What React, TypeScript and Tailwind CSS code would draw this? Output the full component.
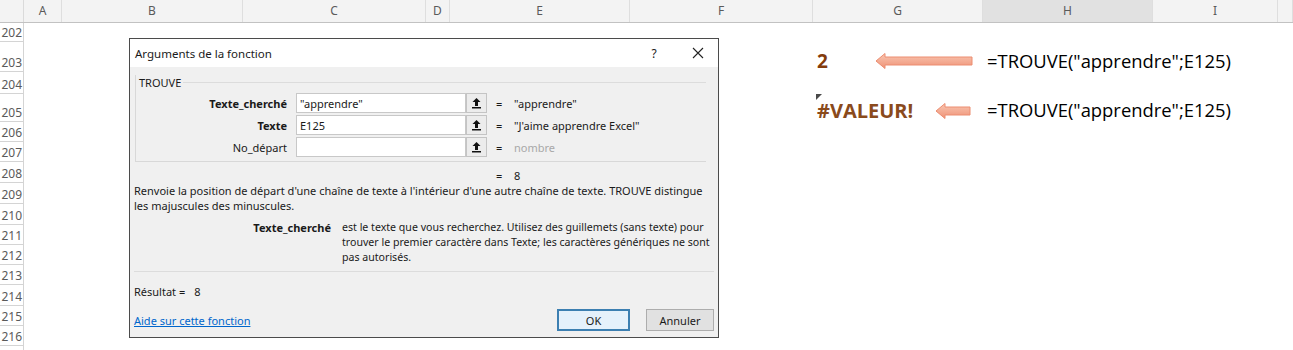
import React from 'react';

const cols = [
    { l: 'A', w: 'w-[38px]' },
    { l: 'B', w: 'w-[181px]' },
    { l: 'C', w: 'w-[183px]' },
    { l: 'D', w: 'w-[24px]' },
    { l: 'E', w: 'w-[180px]' },
    { l: 'F', w: 'w-[183px]' },
    { l: 'G', w: 'w-[170px]' },
    { l: 'H', w: 'w-[170px]', sel: true },
    { l: 'I', w: 'w-[125px]' },
    { l: '', w: 'flex-1' },
];

const rows = [
    { n: 202, h: 'h-[19px]' },
    { n: 203, h: 'h-[30px]' },
    { n: 204, h: 'h-[22px]' },
    { n: 205, h: 'h-[28px]' },
    { n: 206, h: 'h-[20px]' },
    { n: 207, h: 'h-[20px]' },
    { n: 208, h: 'h-[21px]' },
    { n: 209, h: 'h-[21px]' },
    { n: 210, h: 'h-[21px]' },
    { n: 211, h: 'h-[20px]' },
    { n: 212, h: 'h-[20px]' },
    { n: 213, h: 'h-[20px]' },
    { n: 214, h: 'h-[21px]' },
    { n: 215, h: 'h-[20px]' },
    { n: 216, h: 'h-[20px]' },
];

const Arrow: React.FC<{ w: number; id: string }> = ({ w, id }) => (
    <svg width={w} height="18" viewBox={`0 0 ${w} 18`}>
        <defs>
            <linearGradient id={id} x1="0" y1="0" x2="0" y2="1">
                <stop offset="0" stopColor="#f9c7b3" />
                <stop offset="1" stopColor="#ef9276" />
            </linearGradient>
        </defs>
        <path
            d={`M1 9 L10 1.5 L10 5 L${w - 1} 5 L${w - 1} 13 L10 13 L10 16.5 Z`}
            fill={`url(#${id})`}
            stroke="#ec8d70"
            strokeWidth="1"
        />
    </svg>
);

const RefButton: React.FC = () => (
    <div className="w-[21px] h-[20px] border border-[#c4c4c4] bg-[#ececec] flex items-center justify-center">
        <svg width="11" height="12" viewBox="0 0 11 12">
            <path d="M5.5 1 L1.5 5 L4 5 L4 9 L7 9 L7 5 L9.5 5 Z" fill="#111" />
            <rect x="1" y="10" width="9" height="1.5" fill="#111" />
        </svg>
    </div>
);

const ArgRow: React.FC<{ label: string; bold?: boolean; value: string; result: string; muted?: boolean }> = ({
    label,
    bold,
    value,
    result,
    muted,
}) => (
    <div className="flex items-center h-[20px]">
        <div className={`w-[151px] text-right ${bold ? 'font-bold' : ''}`}>{label}</div>
        <div className="ml-[9px] w-[170px] h-[20px] border border-[#c8c8c8] bg-white flex items-center px-[3px]">{value}</div>
        <RefButton />
        <div className="ml-[9px] w-[18px]">=</div>
        <div className={muted ? 'text-[#a8a8a8]' : ''}>{result}</div>
    </div>
);

const Dialog: React.FC = () => (
    <div className="absolute left-[129px] top-[38px] w-[590px] h-[300px] border border-[#4b4b4b] bg-[#f0f0f0] text-[11px] leading-[15px] text-[#1a1a1a] font-['Noto_Sans',sans-serif] flex flex-col">
        {/* Title bar */}
        <div className="h-[28px] bg-white flex items-center pl-[5px] pr-[14px] text-[11.5px]">
            <span className="flex-1">Arguments de la fonction</span>
            <span className="w-[20px] text-center mr-[28px] text-[12px]">?</span>
            <svg width="12" height="12" viewBox="0 0 12 12">
                <path d="M1 1 L11 11 M11 1 L1 11" stroke="#222" strokeWidth="1.1" />
            </svg>
        </div>

        {/* Group box */}
        <div className="ml-[5px] mr-[12px] mt-[8px] border-l border-b border-[#d8d8d8] pb-[4px]">
            <div className="flex items-center -ml-px h-[14px]">
                <span className="pl-[4px] pr-[2px]">TROUVE</span>
                <div className="flex-1 h-px bg-[#dcdcdc]" />
            </div>
            <div className="flex flex-col gap-[2px] mt-[4px]">
                <ArgRow label="Texte_cherché" bold value={'"apprendre"'} result={'"apprendre"'} />
                <ArgRow label="Texte" bold value="E125" result={'"J\'aime apprendre Excel"'} />
                <ArgRow label="No_départ" value="" result="nombre" muted />
            </div>
        </div>

        <div className="flex h-[16px] items-center mt-[5px] ml-[366px]">
            <span className="w-[18px]">=</span>
            <span>8</span>
        </div>

        <div className="px-[4px] whitespace-nowrap">
            Renvoie la position de départ d'une chaîne de texte à l'intérieur d'une autre chaîne de texte. TROUVE distingue
            <br />
            les majuscules des minuscules.
        </div>

        <div className="flex mt-[7px]">
            <div className="w-[212px] shrink-0 text-right font-bold pr-[11px]">Texte_cherché</div>
            <div className="flex-1 whitespace-nowrap text-[10.6px]">
                est le texte que vous recherchez. Utilisez des guillemets (sans texte) pour
                <br />
                trouver le premier caractère dans Texte; les caractères génériques ne sont
                <br />
                pas autorisés.
            </div>
        </div>

        <div className="mx-[4px] mt-[6px] h-px bg-[#dcdcdc]" />

        <div className="px-[4px] mt-[12px]">
            Résultat =<span className="ml-[9px]">8</span>
        </div>

        <div className="flex items-center px-[4px] mt-[10px]">
            <span className="flex-1 text-[#0066cc] underline">Aide sur cette fonction</span>
            <div className="w-[73px] h-[22px] border-2 border-[#3c7fb1] bg-[#e5f1fb] flex items-center justify-center">OK</div>
            <div className="ml-[16px] w-[68px] h-[22px] border border-[#adadad] bg-[#e1e1e1] flex items-center justify-center">
                Annuler
            </div>
        </div>
    </div>
);

const App: React.FC = () => {
    return (
        <div className="relative w-[1293px] h-[350px] overflow-hidden bg-white font-['Noto_Sans',sans-serif]">
            {/* Column headers */}
            <div className="flex h-[23px] bg-[#f3f3f3] border-b border-[#c2c2c2] text-[12px] text-[#5a5a5a]">
                <div className="w-[24px] border-r border-[#dadada]" />
                {cols.map((c, i) => (
                    <div
                        key={i}
                        className={`${c.w} flex items-center justify-center border-r border-[#dedede] ${
                            c.sel ? 'bg-[#e1e1e1]' : ''
                        }`}
                    >
                        {c.l}
                    </div>
                ))}
            </div>

            {/* Rows */}
            {rows.map((r) => (
                <div key={r.n} className={`flex ${r.h}`}>
                    <div className="w-[24px] shrink-0 border-r border-b border-[#d4d4d4] flex items-end justify-end pr-[1px] text-[12px] leading-[16px] text-[#5a5a5a]">
                        {r.n}
                    </div>
                    <div className="w-[789px] shrink-0" />
                    {r.n === 203 && (
                        <>
                            <div className="w-[170px] shrink-0 flex items-center pl-[4px] pt-[8px]">
                                <span className="text-[19px] font-bold text-[#843c0c] font-['Open_Sans',sans-serif]">2</span>
                                <span className="ml-[47px]">
                                    <Arrow w={98} id="a1" />
                                </span>
                            </div>
                            <div className="flex items-center pl-[4px] pt-[8px] text-[18.4px] text-black font-['Open_Sans',sans-serif]">
                                =TROUVE("apprendre";E125)
                            </div>
                        </>
                    )}
                    {r.n === 205 && (
                        <>
                            <div className="relative w-[170px] shrink-0 flex items-center pl-[4px] pt-[6px]">
                                <svg className="absolute left-[3px] top-0" width="6" height="6" viewBox="0 0 6 6">
                                    <path d="M0 0 L6 0 L0 6 Z" fill="#4a4a4a" />
                                </svg>
                                <span className="text-[20px] font-bold text-[#8a4a1c] font-['Open_Sans',sans-serif]">#VALEUR!</span>
                                <span className="ml-[22px]">
                                    <Arrow w={36} id="a2" />
                                </span>
                            </div>
                            <div className="flex items-center pl-[4px] pt-[4px] text-[18.4px] text-black font-['Open_Sans',sans-serif]">
                                =TROUVE("apprendre";E125)
                            </div>
                        </>
                    )}
                </div>
            ))}
            <div className="w-[24px] h-[10px] border-r border-[#d4d4d4]" />

            <Dialog />
        </div>
    );
};

export default App;
